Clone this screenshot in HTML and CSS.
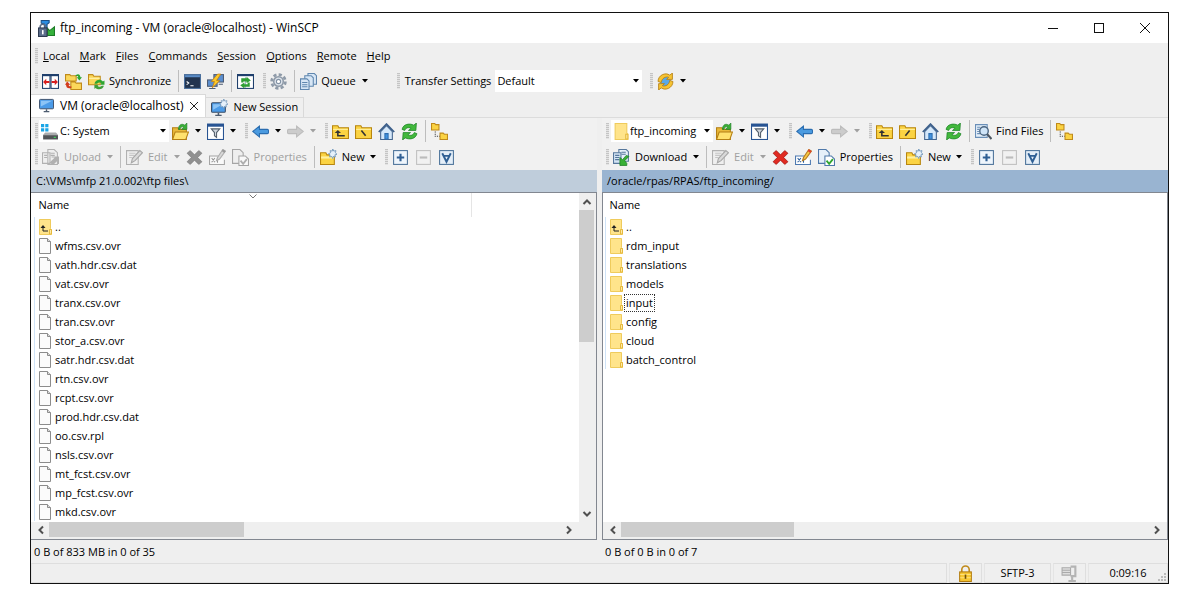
FILE: index.html
```html
<!DOCTYPE html>
<html lang="en">
<head>
    <meta charset="UTF-8">
    <meta name="viewport" content="width=device-width, initial-scale=1.0">
    <title>ftp_incoming - VM (oracle@localhost) - WinSCP</title>
    <link rel="stylesheet" href="styles.css">
</head>
<body>

    <!-- icon sprite -->
    <svg class="sprite">
        <symbol id="i-app" viewBox="0 0 16 16"><path d="M3 .5h7.500v2L8.500 4v3H6V4L3 3z" fill="#2b8ce0" stroke="#1b4f86"/><path d="M9 8l2 2 4.500-3.500v8H9z" fill="#36b13c" stroke="#1c7a26"/><path d="M2 8V6.500a2.500 2.500 0 0 1 5 0V8" fill="none" stroke="#5b6b84" stroke-width="1.500"/><rect x=".5" y="7.500" width="8" height="8" fill="#5d6f8c" stroke="#2e3b52"/><path d="M4.500 9.500v4" stroke="#fff" stroke-width="1.500"/></symbol>
        <symbol id="i-compare" viewBox="0 0 16 16"><rect x=".5" y="1.500" width="7" height="13" fill="#fff" stroke="#1f3f6c"/><rect x="8.500" y="1.500" width="7" height="13" fill="#fff" stroke="#1f3f6c"/><path d="M0 2h16" stroke="#1f3f6c" stroke-width="2"/><path d="M1 8.500l3-3v2h3v2H4v2zM15 8.500l-3-3v2H9v2h3v2z" fill="#d81e1e"/></symbol>
        <symbol id="i-syncdirs" viewBox="0 0 16 16"><path d="M.5 1.500h4l1 1h5v5H.5zM5.500 8.500h4l1 1h5v6h-10z" fill="#fbd75a" stroke="#c08a1a"/><path d="M10 2c3-2 4.500 0 4.500 2H16l-2.500 3L11 4h1.500c0-1-1-1.500-2.500-1z" fill="#2fa52f"/><path d="M6 14c-4 1-5-1-5-3H0l2-3 3 3H3.500c0 1 1 2 2.500 1.500z" fill="#d23a1c"/></symbol>
        <symbol id="i-sync" viewBox="0 0 16 16"><path d="M.5 1.500h4l1 1.500h6v8H.5z" fill="#fbd75a" stroke="#c08a1a"/><path d="M1 5h10" stroke="#fff3b0"/><path d="M6 10c1-4 6-5 8-2l1.500-1v4h-4l1-1c-1-2-3-1-4 0z" fill="#2fa52f"/><path d="M15 12c-1 4-6 4-8 2l-1 1v-4h4l-1 1c1 1.500 3 1 4 0z" fill="#3f9f38"/></symbol>
        <symbol id="i-term" viewBox="0 0 16 16"><rect x=".5" y="1.500" width="15" height="13" fill="#22344f" stroke="#4b6f9c"/><path d="M1 3h14" stroke="#5b8dc8" stroke-width="2"/><path d="M2.500 8l2 1.500-2 1.500M6 12h3" fill="none" stroke="#fff"/></symbol>
        <symbol id="i-putty" viewBox="0 0 16 16"><rect x="6.500" y="1.500" width="9" height="7" fill="#5b8fd0" stroke="#4d5c74"/><rect x=".5" y="6.500" width="9" height="6" fill="#5b8fd0" stroke="#4d5c74"/><path d="M2 14.500h6M11 10.500h4" stroke="#4d5c74"/><path d="M10 1L4 8h3l-2 6 7-7H9l4-6z" fill="#fcc928" stroke="#c67d10" stroke-width=".7"/></symbol>
        <symbol id="i-sdoc" viewBox="0 0 16 16"><rect x=".5" y="1.500" width="15" height="13" fill="#fff" stroke="#1f3f6c"/><path d="M0 2h16" stroke="#1f3f6c" stroke-width="2"/><path d="M8 4v10" stroke="#9fb2c9"/><path d="M4 9V5h5V3.500L13 7 9 9.500V8H6v1zM12 9v4H7v1.500L3 11.500 7 9v1.500h3V9z" fill="#2f9e35"/></symbol>
        <symbol id="i-gear" viewBox="0 0 16 16"><circle cx="8" cy="8" r="6.500" fill="none" stroke="#8e9aa8" stroke-width="2.500" stroke-dasharray="3 2.100"/><circle cx="8" cy="8" r="4.500" fill="#dfe5ec" stroke="#8e9aa8" stroke-width="1.500"/><circle cx="8" cy="8" r="2" fill="#fff" stroke="#8292a4"/></symbol>
        <symbol id="i-queue" viewBox="0 0 16 16"><g fill="#d7e6f5" stroke="#5f86ae"><path d="M7.500.5h6l2 2v8h-8z"/><path d="M4.500 2.500h6l2 2v8h-8z"/><path d="M.5 5.500h6l2 2v8h-8z"/></g><path d="M2 9h5M2 11h5M2 13h5" stroke="#5f86ae"/></symbol>
        <symbol id="i-browse" viewBox="0 0 16 16"><circle cx="8" cy="8" r="5" fill="#58a9ea"/><path d="M1 8c0-6 7-9 11-6l2.500-2v6H9l2-2C8 3 4.500 5 4 9z" fill="#f6c332" stroke="#b67f13" stroke-width=".8"/><path d="M15 8c0 6-7 9-11 6l-2.500 2v-6H7l-2 2c3 1 6.500-1 7-5z" fill="#f6c332" stroke="#b67f13" stroke-width=".8"/></symbol>
        <symbol id="i-screen" viewBox="0 0 16 16"><rect x=".5" y="1.500" width="15" height="10" rx="1" fill="#4b9be8" stroke="#3b4d66"/><path d="M2 3h12L2 9z" fill="#8cc4f6"/><path d="M5 14.500h6M8 12v2" stroke="#4d5c70" stroke-width="1.500"/></symbol>
        <symbol id="i-newtab" viewBox="0 0 16 16"><rect x=".5" y="3.500" width="13" height="9" rx="1" fill="#4b9be8" stroke="#3b4d66"/><path d="M2 5h9l-9 5z" fill="#8cc4f6"/><path d="M4 15.500h6M7 13v2" stroke="#4d5c70" stroke-width="1.500"/><path d="M12 0l1 2 2-.5-.5 2L16 5l-2 .5.5 2-2-.5L12 9l-1-2-2 .5.500-2L8 4.500l2-1L9.500 1.500l2 .5z" fill="#e6f1fb" stroke="#6d93b8" stroke-width=".7"/></symbol>
        <symbol id="i-drive" viewBox="0 0 16 16"><path d="M0 1h3v3H0zM4 1h3v3H4zM0 5h3v3H0zM4 5h3v3H4z" fill="#19a5e6"/><path d="M2 11l2-2h10l2 2v1H2z" fill="#a9abad"/><path d="M2 11.500h14v4H2z" fill="#515457"/><path d="M12 13.500h2" stroke="#3ae05a"/></symbol>
        <symbol id="i-folder" viewBox="0 0 13 16"><path d="M.5.5h11v9l1 1v5H.5z" fill="#ffe48b" stroke="#efcb5c"/><path d="M10.500 15v-4.500h2V15z" fill="#ffe9a6" stroke="#e5b93d"/></symbol>
        <symbol id="i-folderup" viewBox="0 0 13 16"><path d="M.5.5h11v9l1 1v5H.5z" fill="#ffe48b" stroke="#efcb5c"/><path d="M10.500 15v-4.500h2V15z" fill="#ffe9a6" stroke="#e5b93d"/><path d="M4 7v5h5" fill="none" stroke="#222"/><path d="M1.500 9L4 6l2.500 3z" fill="#222"/></symbol>
        <symbol id="i-file" viewBox="0 0 13 16"><path d="M.5.5h8l3 3v12H.5z" fill="#fbfbfb" stroke="#8c8c8c"/><path d="M8.500.5v3h3" fill="#ddd" stroke="#8c8c8c"/></symbol>
        <symbol id="i-open" viewBox="0 0 16 16"><path d="M.5 15.500v-11h5l1 1.500h7v9.500z" fill="#e9b93a" stroke="#b47f14"/><path d="M3 8.500h12.500l-2.500 7H.5z" fill="#ffe16e" stroke="#b47f14"/><path d="M6 6C6 2 9 0 12 2l2-2v6H9l2-2c-2-1-3 0-3.500 2z" fill="#3aae36" stroke="#1e7c25" stroke-width=".6"/></symbol>
        <symbol id="i-filter" viewBox="0 0 16 16"><rect x=".5" y="1.500" width="15" height="14" fill="#fff" stroke="#285493"/><path d="M0 2h16" stroke="#285493" stroke-width="3"/><path d="M4 5.500h8L9 9v4.500L7 12V9z" fill="#cfd5dc" stroke="#56606c"/></symbol>
        <symbol id="i-back" viewBox="0 0 16 16"><path d="M.7 8L7 3v3h7.500q1 0 1 1v2q0 1-1 1H7v3z" fill="#4b9be0" stroke="#2a6db0"/></symbol>
        <symbol id="i-fwd" viewBox="0 0 16 16"><path d="M15.300 8L9 3v3H1.500q-1 0-1 1v2q0 1 1 1H9v3z" fill="#b4b4b4" stroke="#999"/></symbol>
        <symbol id="i-parent" viewBox="0 0 16 16"><path d="M.5 14.500v-12h5l1 2h9v10z" fill="#fbd343" stroke="#b8860f"/><path d="M1 6h14" stroke="#fff0a0"/><path d="M5.500 8v4H12" fill="none" stroke="#333" stroke-width="1.500"/><path d="M2.500 9.500l3-3 3 3z" fill="#333"/></symbol>
        <symbol id="i-rootl" viewBox="0 0 16 16"><path d="M.5 14.500v-12h5l1 2h9v10z" fill="#fbd343" stroke="#b8860f"/><path d="M1 6h14" stroke="#fff0a0"/><path d="M6 7l4 5" stroke="#333" stroke-width="1.500"/></symbol>
        <symbol id="i-rootr" viewBox="0 0 16 16"><path d="M.5 14.500v-12h5l1 2h9v10z" fill="#fbd343" stroke="#b8860f"/><path d="M1 6h14" stroke="#fff0a0"/><path d="M10 7l-4 5" stroke="#333" stroke-width="1.500"/></symbol>
        <symbol id="i-home" viewBox="0 0 16 16"><path d="M2.500 8v7.500h11V8L8 2.500z" fill="#d5e8fa" stroke="#44658e"/><path d="M6.500 15v-5h3v5z" fill="#4293e0" stroke="#2f6eb0"/><path d="M.7 8.500L8 1l7.300 7.500" fill="none" stroke="#3f618c" stroke-width="1.600"/></symbol>
        <symbol id="i-refresh" viewBox="0 0 16 16"><path d="M1 6c1-5 7-6 11-4l2.500-2-.5 7H7l2.500-2C7 4 5 4 3.500 7z" fill="#42b83c" stroke="#1d8427" stroke-width=".7"/><path d="M15 10c-1 5-7 6-11 4l-2.500 2L2 9h7l-2.500 2c2.500 1 4.500 1 6-2z" fill="#42b83c" stroke="#1d8427" stroke-width=".7"/></symbol>
        <symbol id="i-tree" viewBox="0 0 16 16"><path d="M.5.500h3l1 1h3v5h-7zM8.500 9.500h3l1 1h3v5h-7z" fill="#fbd343" stroke="#c08a1a"/><path d="M4 8v4.500h4" fill="none" stroke="#333" stroke-dasharray="1 1"/></symbol>
        <symbol id="i-upload" viewBox="0 0 16 16"><path d="M.5 3.500h7v10h-7zM5.500.5h6l3 3v11h-9z" fill="#eee" stroke="#888"/><path d="M2 6h3M2 8h3M8 4h4M8 6h4" stroke="#888"/><path d="M7 13l5-5h-3V7h7v7h-1.500v-3l-4 4z" fill="#888"/></symbol>
        <symbol id="i-download" viewBox="0 0 16 16"><path d="M5.500.5h7l2 2v9h-9z" fill="#e6f0fa" stroke="#56779c"/><path d="M.5 3.500h7v10h-7z" fill="#d4e4f4" stroke="#56779c"/><path d="M2 6h4M2 8h4M2 10h4M8 3h4M8 5h4" stroke="#56779c"/><path d="M15 7l-4 4 2 2.500v2H6.500V8L9 10l3.500-4z" fill="#38b036" stroke="#1b7c25" stroke-width=".7"/></symbol>
        <symbol id="i-edit" viewBox="0 0 16 16"><path d="M.5 1.500h11v13H.5z" fill="#eee" stroke="#888"/><path d="M3 4h6M3 6h5M3 8h3" stroke="#aaa"/><path d="M5 13l1-4 7-7.500 2.500 2L8.500 11z" fill="#ccc" stroke="#777"/></symbol>
        <symbol id="i-del" viewBox="0 0 16 16"><path d="M1 4l3-2.500 4 4 4-4L15 4l-4 4 4 4-3 2.500-4-4-4 4L1 12l4-4z" fill="#e12b22" stroke="#9c1510" stroke-width=".7"/></symbol>
        <symbol id="i-rename" viewBox="0 0 16 16"><path d="M9 6.500H.5v8h14V10" fill="#fff" stroke="#4d79b0"/><path d="M2.500 8.500l3 4M5.500 8.500l-3 4M8 8v5" stroke="#2d5f9c"/><path d="M7 11l1-3 5-7.500L15.500 2 10 9.500z" fill="#f8c845" stroke="#b57a20"/><path d="M12.500 1L15 3" stroke="#e04030" stroke-width="2"/></symbol>
        <symbol id="i-props" viewBox="0 0 16 16"><path d="M.5.5h7l3 3v10h-10z" fill="#e6f0fa" stroke="#4f79aa"/><path d="M6.500 6.500h6l3 3v6h-9z" fill="#fff" stroke="#4f79aa"/><path d="M8 11l2.500 3L14 9.500" fill="none" stroke="#2fa52f" stroke-width="1.700"/></symbol>
        <symbol id="i-new" viewBox="0 0 16 16"><path d="M.5 14.500v-11h5l1 2h7v9z" fill="#fbd343" stroke="#b8860f"/><path d="M1 8h12" stroke="#fff0a0" stroke-width="2"/><path d="M12 0l1 2 2-.5-.5 2L16 5l-2 .5.5 2-2-.5L12 9l-1-2-2 .5.500-2L8 4.500l2-1L9.500 1.500l2 .5z" fill="#e6f1fb" stroke="#6d93b8" stroke-width=".8"/></symbol>
        <symbol id="i-plus" viewBox="0 0 16 16"><rect x="1.500" y="1.500" width="13" height="13" fill="#eef5fc" stroke="#4c7299"/><path d="M4.500 8h7M8 4.500v7" stroke="#2f5f94" stroke-width="2"/></symbol>
        <symbol id="i-minus" viewBox="0 0 16 16"><rect x="1.500" y="1.500" width="13" height="13" fill="#f1f1f1" stroke="#a0a0a0"/><path d="M4.500 8h7" stroke="#999" stroke-width="2"/></symbol>
        <symbol id="i-invert" viewBox="0 0 16 16"><rect x="1.500" y="1.500" width="13" height="13" fill="#e4eef8" stroke="#4c7299"/><path d="M4 4L8 12l4-8M5 6.500h6" fill="none" stroke="#2f5f94" stroke-width="1.800"/></symbol>
        <symbol id="i-find" viewBox="0 0 16 16"><path d="M.5 1.500h11v12H.5z" fill="#e6f0fa" stroke="#6a8fb8"/><path d="M2 4h3M2 6h2M2 8h2M2 10h3" stroke="#6a8fb8"/><circle cx="8.500" cy="7.500" r="4" fill="#cfe4f7" stroke="#4b6580" stroke-width="1.300"/><path d="M11.500 10.500l4 4.500" stroke="#4b5560" stroke-width="2"/></symbol>
        <symbol id="i-lock" viewBox="0 0 16 16"><path d="M4.500 7V4.500a3.500 3.500 0 0 1 7 0V7" fill="none" stroke="#c08a1a" stroke-width="1.500"/><rect x="2.500" y="6.500" width="11" height="9" fill="#f7c732" stroke="#b27c10"/><path d="M3 9h10M3 12h10" stroke="#ffe27a"/><path d="M8 9v4" stroke="#70500a" stroke-width="1.500"/></symbol>
        <symbol id="i-clamp" viewBox="0 0 16 16"><path d="M1 2.500h8v7H1zM1 5h8M1 7h8" fill="#ddd" stroke="#aaa"/><path d="M9 1.500h4.500v9H9" fill="none" stroke="#b4b4b4" stroke-width="2"/><path d="M10.500 11v3M7 15h7" stroke="#b4b4b4" stroke-width="2"/></symbol>
        <symbol id="i-caret" viewBox="0 0 6 4"><path d="M0 0h6L3 3.500z" fill="currentColor"/></symbol>
        <symbol id="i-chev" viewBox="0 0 10 10"><path d="M1.500 7L5 3.500 8.500 7" fill="none" stroke="currentColor" stroke-width="2"/></symbol>
    </svg>

    <div class="window">
        <header class="titlebar">
            <svg class="icon"><use href="#i-app"/></svg>
            <span class="title">ftp_incoming - VM (oracle@localhost) - WinSCP</span>
            <button class="winbtn" aria-label="Minimize"><svg viewBox="0 0 12 12"><path d="M1 6.500h10" stroke="#111"/></svg></button>
            <button class="winbtn" aria-label="Maximize"><svg viewBox="0 0 12 12"><rect x="1.500" y="1.500" width="9" height="9" fill="none" stroke="#111"/></svg></button>
            <button class="winbtn" aria-label="Close"><svg viewBox="0 0 12 12"><path d="M1 1l10 10M11 1L1 11" stroke="#111"/></svg></button>
        </header>

        <nav class="menu">
            <span class="grip"></span>
            <button><u>L</u>ocal</button>
            <button><u>M</u>ark</button>
            <button><u>F</u>iles</button>
            <button><u>C</u>ommands</button>
            <button><u>S</u>ession</button>
            <button><u>O</u>ptions</button>
            <button><u>R</u>emote</button>
            <button><u>H</u>elp</button>
        </nav>

        <div class="toolbar main-toolbar">
            <span class="grip"></span>
            <button aria-label="Compare directories"><svg class="icon"><use href="#i-compare"/></svg></button>
            <button aria-label="Synchronize browsing"><svg class="icon"><use href="#i-syncdirs"/></svg></button>
            <button><svg class="icon"><use href="#i-sync"/></svg>Synchronize</button>
            <span class="sep"></span>
            <button aria-label="Open terminal"><svg class="icon"><use href="#i-term"/></svg></button>
            <button aria-label="Open in PuTTY"><svg class="icon"><use href="#i-putty"/></svg></button>
            <span class="sep"></span>
            <button aria-label="Keep remote directory up to date"><svg class="icon"><use href="#i-sdoc"/></svg></button>
            <span class="grip"></span>
            <button aria-label="Preferences"><svg class="icon"><use href="#i-gear"/></svg></button>
            <span class="sep"></span>
            <button><svg class="icon"><use href="#i-queue"/></svg>Queue</button>
            <button class="drop" aria-label="Queue options"><svg class="caret"><use href="#i-caret"/></svg></button>
            <span class="grip settings-grip"></span>
            <label for="transfer">Transfer Settings</label>
            <div class="combo combo-transfer">
                <select id="transfer"><option>Default</option></select>
                <svg class="caret"><use href="#i-caret"/></svg>
            </div>
            <span class="grip"></span>
            <button aria-label="Synchronize session"><svg class="icon"><use href="#i-browse"/></svg></button>
            <button class="drop" aria-label="Session options"><svg class="caret"><use href="#i-caret"/></svg></button>
        </div>

        <div class="tabs">
            <div class="tab active">
                <svg class="icon"><use href="#i-screen"/></svg>
                <a href="#session">VM (oracle@localhost)</a>
                <button aria-label="Close tab"><svg viewBox="0 0 10 10"><path d="M1 1l8 8M9 1L1 9" stroke="#222"/></svg></button>
            </div>
            <div class="tab">
                <svg class="icon"><use href="#i-newtab"/></svg>
                <a href="#new">New Session</a>
            </div>
        </div>

        <main class="panels" id="session">
            <section class="panel">
                <div class="toolbar">
                    <span class="grip"></span>
                    <div class="combo combo-local">
                        <svg class="icon"><use href="#i-drive"/></svg>
                        <select aria-label="Local drive"><option>C: System</option></select>
                        <svg class="caret"><use href="#i-caret"/></svg>
                    </div>
                    <button aria-label="Open directory"><svg class="icon"><use href="#i-open"/></svg></button>
                    <button class="drop" aria-label="Bookmarks"><svg class="caret"><use href="#i-caret"/></svg></button>
                    <button aria-label="Filter"><svg class="icon"><use href="#i-filter"/></svg></button>
                    <button class="drop" aria-label="Filter options"><svg class="caret"><use href="#i-caret"/></svg></button>
                    <span class="grip"></span>
                    <button aria-label="Back"><svg class="icon"><use href="#i-back"/></svg></button>
                    <button class="drop" aria-label="Back history"><svg class="caret"><use href="#i-caret"/></svg></button>
                    <button aria-label="Forward" disabled><svg class="icon"><use href="#i-fwd"/></svg></button>
                    <button class="drop" aria-label="Forward history" disabled><svg class="caret"><use href="#i-caret"/></svg></button>
                    <span class="grip"></span>
                    <button aria-label="Parent directory"><svg class="icon"><use href="#i-parent"/></svg></button>
                    <button aria-label="Root directory"><svg class="icon"><use href="#i-rootl"/></svg></button>
                    <button aria-label="Home directory"><svg class="icon"><use href="#i-home"/></svg></button>
                    <button aria-label="Refresh"><svg class="icon"><use href="#i-refresh"/></svg></button>
                    <span class="sep"></span>
                    <button aria-label="Tree"><svg class="icon"><use href="#i-tree"/></svg></button>
                </div>
                <div class="toolbar actions">
                    <span class="grip"></span>
                    <button disabled><svg class="icon"><use href="#i-upload"/></svg>Upload</button>
                    <button class="drop" aria-label="Upload options" disabled><svg class="caret"><use href="#i-caret"/></svg></button>
                    <span class="sep"></span>
                    <button disabled><svg class="icon"><use href="#i-edit"/></svg>Edit</button>
                    <button class="drop" aria-label="Edit options" disabled><svg class="caret"><use href="#i-caret"/></svg></button>
                    <button aria-label="Delete" disabled><svg class="icon"><use href="#i-del"/></svg></button>
                    <button aria-label="Rename" disabled><svg class="icon"><use href="#i-rename"/></svg></button>
                    <button disabled><svg class="icon"><use href="#i-props"/></svg>Properties</button>
                    <span class="sep"></span>
                    <button><svg class="icon"><use href="#i-new"/></svg>New<svg class="caret"><use href="#i-caret"/></svg></button>
                    <span class="grip"></span>
                    <button aria-label="Select files"><svg class="icon"><use href="#i-plus"/></svg></button>
                    <button aria-label="Unselect files" disabled><svg class="icon"><use href="#i-minus"/></svg></button>
                    <button aria-label="Select all"><svg class="icon"><use href="#i-invert"/></svg></button>
                </div>
                <div class="path">C:\VMs\mfp 21.0.002\ftp files\</div>
                <div class="list">
                    <div class="files">
                        <svg class="sort" viewBox="0 0 8 5"><path d="M.5.5L4 4 7.500.5" fill="none" stroke="#777"/></svg>
                        <table>
                            <thead><tr><th>Name</th><th></th></tr></thead>
                            <tbody>
                                <tr><td><svg><use href="#i-folderup"/></svg><span>..</span></td></tr>
                                <tr><td><svg><use href="#i-file"/></svg><span>wfms.csv.ovr</span></td></tr>
                                <tr><td><svg><use href="#i-file"/></svg><span>vath.hdr.csv.dat</span></td></tr>
                                <tr><td><svg><use href="#i-file"/></svg><span>vat.csv.ovr</span></td></tr>
                                <tr><td><svg><use href="#i-file"/></svg><span>tranx.csv.ovr</span></td></tr>
                                <tr><td><svg><use href="#i-file"/></svg><span>tran.csv.ovr</span></td></tr>
                                <tr><td><svg><use href="#i-file"/></svg><span>stor_a.csv.ovr</span></td></tr>
                                <tr><td><svg><use href="#i-file"/></svg><span>satr.hdr.csv.dat</span></td></tr>
                                <tr><td><svg><use href="#i-file"/></svg><span>rtn.csv.ovr</span></td></tr>
                                <tr><td><svg><use href="#i-file"/></svg><span>rcpt.csv.ovr</span></td></tr>
                                <tr><td><svg><use href="#i-file"/></svg><span>prod.hdr.csv.dat</span></td></tr>
                                <tr><td><svg><use href="#i-file"/></svg><span>oo.csv.rpl</span></td></tr>
                                <tr><td><svg><use href="#i-file"/></svg><span>nsls.csv.ovr</span></td></tr>
                                <tr><td><svg><use href="#i-file"/></svg><span>mt_fcst.csv.ovr</span></td></tr>
                                <tr><td><svg><use href="#i-file"/></svg><span>mp_fcst.csv.ovr</span></td></tr>
                                <tr><td><svg><use href="#i-file"/></svg><span>mkd.csv.ovr</span></td></tr>
                            </tbody>
                        </table>
                    </div>
                    <div class="vscroll">
                        <svg class="chev"><use href="#i-chev"/></svg>
                        <div class="thumb"></div>
                        <svg class="chev down"><use href="#i-chev"/></svg>
                    </div>
                    <div class="hscroll">
                        <svg class="chev left"><use href="#i-chev"/></svg>
                        <div class="thumb"></div>
                        <svg class="chev right"><use href="#i-chev"/></svg>
                    </div>
                </div>
                <div class="status">0 B of 833 MB in 0 of 35</div>
            </section>

            <section class="panel remote">
                <div class="toolbar">
                    <span class="grip"></span>
                    <div class="combo combo-remote">
                        <svg class="icon"><use href="#i-folder"/></svg>
                        <select aria-label="Remote directory"><option>ftp_incoming</option></select>
                        <svg class="caret"><use href="#i-caret"/></svg>
                    </div>
                    <button aria-label="Open directory"><svg class="icon"><use href="#i-open"/></svg></button>
                    <button class="drop" aria-label="Bookmarks"><svg class="caret"><use href="#i-caret"/></svg></button>
                    <button aria-label="Filter"><svg class="icon"><use href="#i-filter"/></svg></button>
                    <button class="drop" aria-label="Filter options"><svg class="caret"><use href="#i-caret"/></svg></button>
                    <span class="grip"></span>
                    <button aria-label="Back"><svg class="icon"><use href="#i-back"/></svg></button>
                    <button class="drop" aria-label="Back history"><svg class="caret"><use href="#i-caret"/></svg></button>
                    <button aria-label="Forward" disabled><svg class="icon"><use href="#i-fwd"/></svg></button>
                    <button class="drop" aria-label="Forward history" disabled><svg class="caret"><use href="#i-caret"/></svg></button>
                    <span class="grip"></span>
                    <button aria-label="Parent directory"><svg class="icon"><use href="#i-parent"/></svg></button>
                    <button aria-label="Root directory"><svg class="icon"><use href="#i-rootr"/></svg></button>
                    <button aria-label="Home directory"><svg class="icon"><use href="#i-home"/></svg></button>
                    <button aria-label="Refresh"><svg class="icon"><use href="#i-refresh"/></svg></button>
                    <span class="sep"></span>
                    <button><svg class="icon"><use href="#i-find"/></svg>Find Files</button>
                    <span class="sep"></span>
                    <button aria-label="Tree"><svg class="icon"><use href="#i-tree"/></svg></button>
                </div>
                <div class="toolbar actions">
                    <span class="grip"></span>
                    <button><svg class="icon"><use href="#i-download"/></svg>Download</button>
                    <button class="drop" aria-label="Download options"><svg class="caret"><use href="#i-caret"/></svg></button>
                    <span class="sep"></span>
                    <button disabled><svg class="icon"><use href="#i-edit"/></svg>Edit</button>
                    <button class="drop" aria-label="Edit options" disabled><svg class="caret"><use href="#i-caret"/></svg></button>
                    <button aria-label="Delete"><svg class="icon"><use href="#i-del"/></svg></button>
                    <button aria-label="Rename"><svg class="icon"><use href="#i-rename"/></svg></button>
                    <button><svg class="icon"><use href="#i-props"/></svg>Properties</button>
                    <span class="sep"></span>
                    <button><svg class="icon"><use href="#i-new"/></svg>New<svg class="caret"><use href="#i-caret"/></svg></button>
                    <span class="grip"></span>
                    <button aria-label="Select files"><svg class="icon"><use href="#i-plus"/></svg></button>
                    <button aria-label="Unselect files" disabled><svg class="icon"><use href="#i-minus"/></svg></button>
                    <button aria-label="Select all"><svg class="icon"><use href="#i-invert"/></svg></button>
                </div>
                <div class="path">/oracle/rpas/RPAS/ftp_incoming/</div>
                <div class="list">
                    <div class="files">
                        <table>
                            <thead><tr><th>Name</th></tr></thead>
                            <tbody>
                                <tr><td><svg><use href="#i-folderup"/></svg><span>..</span></td></tr>
                                <tr><td><svg><use href="#i-folder"/></svg><span>rdm_input</span></td></tr>
                                <tr><td><svg><use href="#i-folder"/></svg><span>translations</span></td></tr>
                                <tr><td><svg><use href="#i-folder"/></svg><span>models</span></td></tr>
                                <tr><td><svg><use href="#i-folder"/></svg><span class="focused">input</span></td></tr>
                                <tr><td><svg><use href="#i-folder"/></svg><span>config</span></td></tr>
                                <tr><td><svg><use href="#i-folder"/></svg><span>cloud</span></td></tr>
                                <tr><td><svg><use href="#i-folder"/></svg><span>batch_control</span></td></tr>
                            </tbody>
                        </table>
                    </div>
                    <div class="hscroll">
                        <svg class="chev left"><use href="#i-chev"/></svg>
                        <div class="thumb"></div>
                        <svg class="chev right"><use href="#i-chev"/></svg>
                    </div>
                </div>
                <div class="status">0 B of 0 B in 0 of 7</div>
            </section>
        </main>

        <footer class="statusbar">
            <div class="cell fill"></div>
            <div class="cell small"><svg class="icon"><use href="#i-lock"/></svg></div>
            <div class="cell protocol">SFTP-3</div>
            <div class="cell small"><svg class="icon"><use href="#i-clamp"/></svg></div>
            <div class="cell time">0:09:16<svg class="resize" viewBox="0 0 8 8"><path d="M6 0h2v2H6zM3 3h2v2H3zM6 3h2v2H6zM0 6h2v2H0zM3 6h2v2H3zM6 6h2v2H6z" fill="#bbb"/></svg></div>
        </footer>
    </div>

</body>
</html>
```
FILE: styles.css
```css
* {
    box-sizing: border-box;
}
body {
    margin: 0;
    height: 100vh;
    padding: 12px 11px 15px 30px;
    background: white;
    color: black;
    font: 11px/16px "Open Sans", "Noto Sans", sans-serif;
}
.sprite {
    display: none;
}
button, select {
    font: inherit;
    color: inherit;
    background: none;
    border: 0;
    padding: 0;
}
svg {
    flex: none;
}
.icon {
    width: 17px;
    height: 17px;
}
.caret {
    width: 6px;
    height: 4px;
}
.window {
    display: flex;
    flex-direction: column;
    height: 100%;
    border: 1px solid #111;
    background: #efefef;
}

/* title bar and menu */
.titlebar {
    display: flex;
    align-items: center;
    height: 30px;
    padding-left: 7px;
    background: white;
    font-size: 12px;
}
.title {
    flex: 1;
    margin-left: 5px;
}
.winbtn {
    display: flex;
    align-items: center;
    justify-content: center;
    width: 46px;
    height: 30px;
}
.winbtn svg {
    width: 12px;
    height: 12px;
}
.menu {
    display: flex;
    align-items: center;
    height: 25px;
    padding-left: 4px;
}
.menu button {
    padding: 0 6px 0 4px;
}

/* toolbars */
.toolbar {
    display: flex;
    align-items: center;
    height: 26px;
    padding-left: 4px;
    white-space: nowrap;
}
.toolbar button {
    display: flex;
    align-items: center;
    gap: 4px;
    height: 22px;
    padding: 0 3px;
}
.actions button {
    gap: 5px;
}
.toolbar .drop {
    justify-content: center;
    width: 12px;
    padding: 0;
}
.toolbar button:disabled {
    color: #a0a0a0;
}
.toolbar button:disabled .icon {
    filter: grayscale(1);
    opacity: 0.6;
}
.grip {
    flex: none;
    width: 3px;
    height: 16px;
    margin-right: 1px;
    background: repeating-linear-gradient(#c4c4c4 0 1px, #e4e4e4 1px 2px);
}
.toolbar button + .grip {
    margin-left: 6px;
}
.toolbar button + .settings-grip {
    margin: 0 5px 0 26px;
}
.sep {
    flex: none;
    width: 1px;
    height: 22px;
    margin: 0 2px 0 4px;
    background: #bdbdbd;
}
.combo {
    display: flex;
    align-items: center;
    height: 22px;
    padding: 0 3px 0 2px;
    background: white;
}
.combo select {
    flex: 1;
    min-width: 0;
    appearance: none;
    overflow: hidden;
}
.combo-transfer {
    width: 147px;
    margin: 0 8px 0 4px;
}
.combo-local {
    width: 130px;
}
.combo-local select {
    margin-left: 2px;
}
.combo-remote {
    width: 102px;
    margin-left: 1px;
}
.combo-remote select {
    margin-right: 7px;
}

/* session tabs */
.tabs {
    display: flex;
    align-items: flex-end;
    height: 24px;
    border-bottom: 1px solid #dcdcdc;
}
.tab {
    display: flex;
    align-items: center;
    gap: 5px;
    height: 20px;
    padding: 0 5px 1px;
    border: 1px solid #d9d9d9;
    border-width: 1px 1px 0 0;
}
.tab.active {
    gap: 6px;
    height: 23px;
    padding: 0 6px 1px 8px;
    background: white;
    font-size: 12px;
}
.active .icon {
    width: 15px;
    height: 15px;
}
.tab a {
    color: inherit;
    text-decoration: none;
}
.tab svg {
    display: block;
}
.tab button svg {
    width: 10px;
    height: 10px;
}

/* file panels */
.panels {
    flex: 1;
    min-height: 0;
    display: grid;
    grid-template-columns: 1fr 1fr;
    gap: 5px;
}
.panel {
    display: flex;
    flex-direction: column;
    min-width: 0;
    min-height: 0;
}
.panel .toolbar {
    background: #f1f1f1;
}
.path {
    height: 22px;
    padding: 3px 5px;
    background: #bfcddb;
}
.remote .path {
    background: #99b4d1;
}
.list {
    flex: 1;
    min-height: 0;
    display: grid;
    grid-template: 1fr 17px / 1fr 17px;
    border: 1px solid #828790;
    border-left-width: 0;
    background: #efefef;
}
.remote .list {
    grid-template-columns: 1fr;
    border-left-width: 1px;
}
.files {
    position: relative;
    overflow: hidden;
    padding-left: 3px;
    background: white;
}
.remote .files {
    padding-left: 2px;
}
.sort {
    position: absolute;
    left: 218px;
    top: 1px;
    width: 8px;
    height: 5px;
}
table {
    width: 100%;
    border-collapse: collapse;
    table-layout: fixed;
}
th {
    width: 437px;
    height: 24px;
    padding: 0 4px;
    border-right: 1px solid #e5e5e5;
    font-weight: normal;
    text-align: left;
}
th:last-child {
    width: auto;
    border-right: 0;
}
tbody {
    border-left: 1px solid #cfe3f7;
}
td {
    height: 19px;
    padding: 0 0 0 4px;
}
td svg {
    float: left;
    width: 13px;
    height: 16px;
}
td span {
    float: left;
    margin: 0 0 0 2px;
    padding: 0 1px;
}
.focused {
    outline: 1px dotted #333;
}
.vscroll, .hscroll {
    display: flex;
    align-items: center;
    color: #505050;
}
.vscroll {
    flex-direction: column;
    padding: 4px 2px 3px 0;
}
.vscroll .thumb {
    width: 15px;
    height: 132px;
    margin: 3px 0 auto;
}
.hscroll .thumb {
    width: 195px;
    height: 15px;
    margin: 0 auto 0 3px;
}
.remote .hscroll .thumb {
    width: 173px;
}
.hscroll {
    padding: 0 5px 2px;
}
.thumb {
    background: #cdcdcd;
}
.chev {
    width: 10px;
    height: 10px;
}
.down {
    transform: rotate(180deg);
}
.left {
    transform: rotate(-90deg);
}
.right {
    transform: rotate(90deg);
}
.status {
    height: 23px;
    padding: 4px 3px;
}

/* bottom status bar */
.statusbar {
    display: flex;
    gap: 2px;
    height: 20px;
}
.cell {
    display: flex;
    align-items: center;
    justify-content: center;
    border: 1px solid #dedede;
    border-left-color: #e4e4e4;
}
.fill {
    flex: 1;
}
.small {
    width: 33px;
}
.protocol {
    width: 67px;
}
.time {
    position: relative;
    width: 80px;
}
.resize {
    position: absolute;
    right: 1px;
    bottom: 1px;
    width: 8px;
    height: 8px;
}
```
